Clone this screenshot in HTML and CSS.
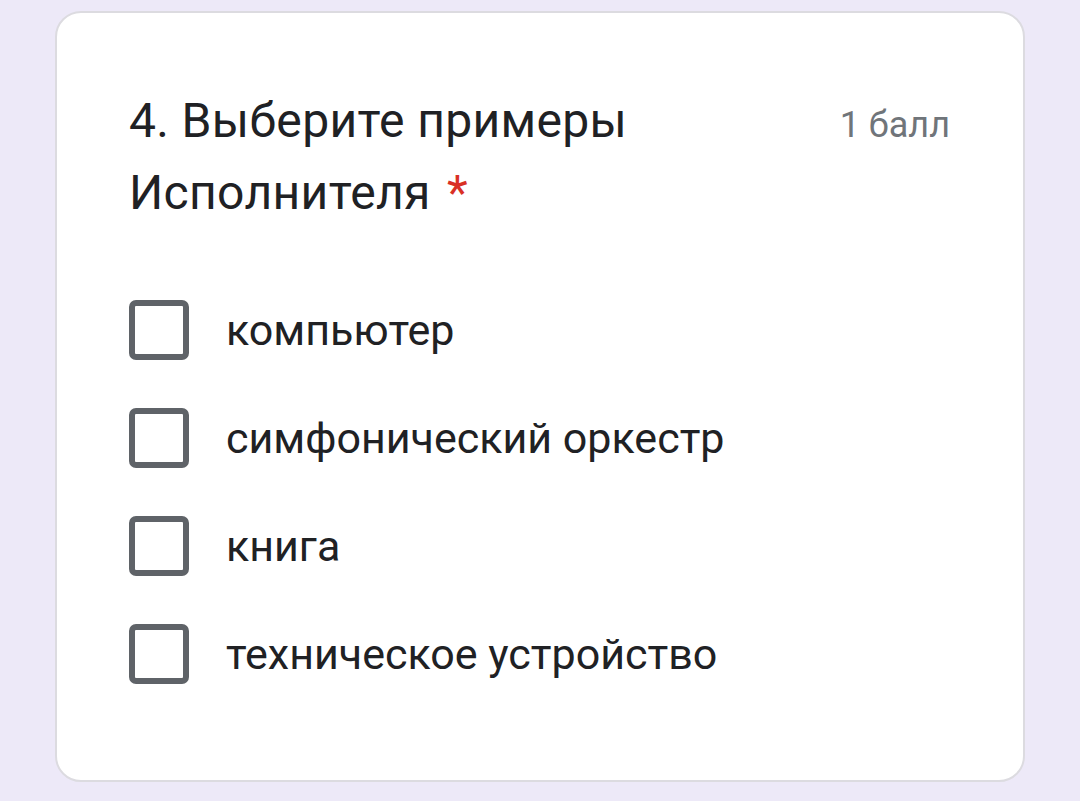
FILE: index.html
```html
<!DOCTYPE html>
<html lang="ru">
<head>
<meta charset="utf-8">
<link rel="stylesheet" href="styles.css">
</head>
<body>
<div class="card">
  <div class="header">
    <div class="title">4. Выберите примеры Исполнителя <span class="req">*</span></div>
    <div class="points">1 балл</div>
  </div>
  <div class="options">
    <div class="option"><span class="box"></span><span class="label">компьютер</span></div>
    <div class="option"><span class="box"></span><span class="label">симфонический оркестр</span></div>
    <div class="option"><span class="box"></span><span class="label">книга</span></div>
    <div class="option"><span class="box"></span><span class="label">техническое устройство</span></div>
  </div>
</div>
</body>
</html>
```
FILE: styles.css
```css
html, body {
  margin: 0;
  padding: 0;
  background: #ede9f8;
}
body {
  padding-top: 11px;
  font-family: Roboto, "Noto Sans", sans-serif;
}
.card {
  box-sizing: border-box;
  width: 970px;
  height: 771px;
  margin-left: 55px;
  background: #ffffff;
  border: 2px solid #dcdbe0;
  border-radius: 26px;
  padding: 72px 73px 0 72px;
}
.header {
  display: flex;
  justify-content: space-between;
  align-items: baseline;
}
.title {
  max-width: 600px;
  font-size: 48px;
  line-height: 72px;
  letter-spacing: 0.35px;
  color: #202124;
}
.req {
  color: #d93025;
  margin-left: 4px;
}
.points {
  font-size: 36px;
  color: #70757a;
}
.options {
  margin-top: 47px;
  display: flex;
  flex-direction: column;
}
.option {
  height: 108px;
  display: flex;
  align-items: center;
}
.box {
  box-sizing: border-box;
  width: 60px;
  height: 60px;
  border: 6px solid #5f6368;
  border-radius: 7px;
  flex: none;
}
.label {
  margin-left: 37px;
  font-size: 43px;
  color: #202124;
}
```
